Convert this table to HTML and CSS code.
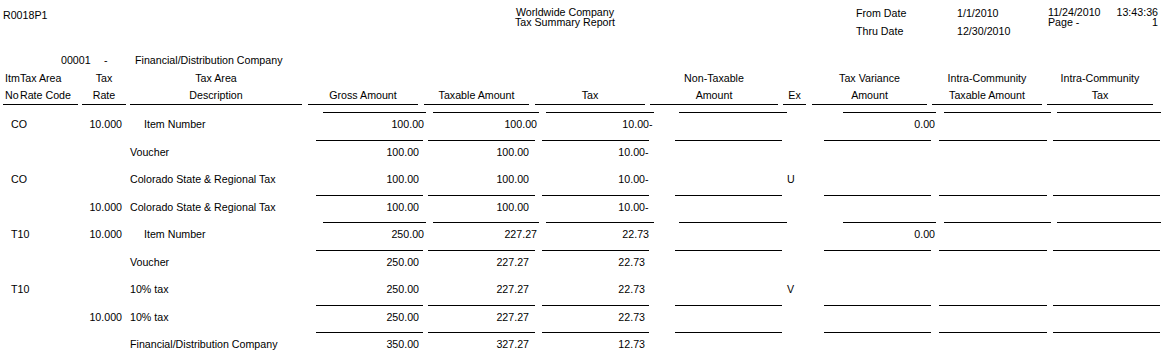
FILE: index.html
```html
<!DOCTYPE html>
<html lang="en">
<head>
<meta charset="utf-8">
<title>Tax Summary Report</title>
<link rel="stylesheet" href="styles.css">
</head>
<body>
<div class="page">
  <header class="top">
    <div class="rid">R0018P1</div>
    <div class="title">
      <div>Worldwide Company</div>
      <div>Tax Summary Report</div>
    </div>
    <div class="dates">
      <span>From Date</span><span>1/1/2010</span>
      <span>Thru Date</span><span>12/30/2010</span>
    </div>
    <div class="stamp">
      <div class="stamp-row"><span>11/24/2010</span><span>13:43:36</span></div>
      <div class="stamp-row"><span>Page -</span><span>1</span></div>
    </div>
  </header>

  <div class="company">
    <span class="co-code">00001</span>
    <span class="co-dash">-</span>
    <span class="co-name">Financial/Distribution Company</span>
  </div>

  <div class="colhead">
    <div class="h h-itm"><div>Itm</div><div>No</div></div>
    <div class="h h-area"><div>Tax Area</div><div>Rate Code</div></div>
    <div class="h h-rate"><div>Tax</div><div>Rate</div></div>
    <div class="h h-desc"><div>Tax Area</div><div>Description</div></div>
    <div class="h h-gross"><div>&nbsp;</div><div>Gross Amount</div></div>
    <div class="h h-taxable"><div>&nbsp;</div><div>Taxable Amount</div></div>
    <div class="h h-tax"><div>&nbsp;</div><div>Tax</div></div>
    <div class="h h-nontax"><div>Non-Taxable</div><div>Amount</div></div>
    <div class="h h-ex"><div>&nbsp;</div><div>Ex</div></div>
    <div class="h h-var"><div>Tax Variance</div><div>Amount</div></div>
    <div class="h h-intra"><div>Intra-Community</div><div>Taxable Amount</div></div>
    <div class="h h-intratax"><div>Intra-Community</div><div>Tax</div></div>
  </div>

  <div class="rows">
    <div class="row row-a ruled">
      <div class="code">CO</div><div class="rate">10.000</div><div class="desc">Item Number</div>
      <div class="amt gross">100.00</div><div class="amt taxable">100.00</div><div class="amt tax">10.00<span class="minus">-</span></div>
      <div class="amt nontax"></div><div class="ex"></div><div class="amt var">0.00</div><div class="amt intra"></div><div class="amt intratax"></div>
    </div>
    <div class="row row-b ruled">
      <div class="code"></div><div class="rate"></div><div class="desc">Voucher</div>
      <div class="amt gross">100.00</div><div class="amt taxable">100.00</div><div class="amt tax">10.00<span class="minus">-</span></div>
      <div class="amt nontax"></div><div class="ex"></div><div class="amt var"></div><div class="amt intra"></div><div class="amt intratax"></div>
    </div>
    <div class="row row-b">
      <div class="code">CO</div><div class="rate"></div><div class="desc">Colorado State &amp; Regional Tax</div>
      <div class="amt gross">100.00</div><div class="amt taxable">100.00</div><div class="amt tax">10.00<span class="minus">-</span></div>
      <div class="amt nontax"></div><div class="ex">U</div><div class="amt var"></div><div class="amt intra"></div><div class="amt intratax"></div>
    </div>
    <div class="row row-b ruled">
      <div class="code"></div><div class="rate">10.000</div><div class="desc">Colorado State &amp; Regional Tax</div>
      <div class="amt gross">100.00</div><div class="amt taxable">100.00</div><div class="amt tax">10.00<span class="minus">-</span></div>
      <div class="amt nontax"></div><div class="ex"></div><div class="amt var"></div><div class="amt intra"></div><div class="amt intratax"></div>
    </div>
    <div class="row row-a ruled">
      <div class="code">T10</div><div class="rate">10.000</div><div class="desc">Item Number</div>
      <div class="amt gross">250.00</div><div class="amt taxable">227.27</div><div class="amt tax">22.73</div>
      <div class="amt nontax"></div><div class="ex"></div><div class="amt var">0.00</div><div class="amt intra"></div><div class="amt intratax"></div>
    </div>
    <div class="row row-b ruled">
      <div class="code"></div><div class="rate"></div><div class="desc">Voucher</div>
      <div class="amt gross">250.00</div><div class="amt taxable">227.27</div><div class="amt tax">22.73</div>
      <div class="amt nontax"></div><div class="ex"></div><div class="amt var"></div><div class="amt intra"></div><div class="amt intratax"></div>
    </div>
    <div class="row row-b">
      <div class="code">T10</div><div class="rate"></div><div class="desc">10% tax</div>
      <div class="amt gross">250.00</div><div class="amt taxable">227.27</div><div class="amt tax">22.73</div>
      <div class="amt nontax"></div><div class="ex">V</div><div class="amt var"></div><div class="amt intra"></div><div class="amt intratax"></div>
    </div>
    <div class="row row-b ruled">
      <div class="code"></div><div class="rate">10.000</div><div class="desc">10% tax</div>
      <div class="amt gross">250.00</div><div class="amt taxable">227.27</div><div class="amt tax">22.73</div>
      <div class="amt nontax"></div><div class="ex"></div><div class="amt var"></div><div class="amt intra"></div><div class="amt intratax"></div>
    </div>
    <div class="row row-b ruled">
      <div class="code"></div><div class="rate"></div><div class="desc">Financial/Distribution Company</div>
      <div class="amt gross">350.00</div><div class="amt taxable">327.27</div><div class="amt tax">12.73</div>
      <div class="amt nontax"></div><div class="ex"></div><div class="amt var"></div><div class="amt intra"></div><div class="amt intratax"></div>
    </div>
  </div>
</div>
</body>
</html>
```

FILE: styles.css
```css
* { box-sizing: border-box; }

body {
  margin: 0;
  background: #fff;
  color: #000;
  font-family: "Liberation Sans", Arial, sans-serif;
  font-size: 8pt;
  line-height: 12px;
}

.page {
  width: 1161px;
  height: 353px;
  overflow: hidden;
  white-space: nowrap;
}

/* ---------- top banner ---------- */
.top {
  display: flex;
  height: 44px;
}
.rid {
  width: 465px;
  padding: 9px 0 0 3px;
}
.title {
  width: 200px;
  text-align: center;
  line-height: 10px;
  padding-top: 7px;
}
.dates {
  margin-left: 191px;
  width: 192px;
  display: grid;
  grid-template-columns: 101px auto;
  align-content: start;
  line-height: 18px;
  padding-top: 4px;
}
.stamp {
  width: 110px;
  line-height: 10px;
  padding-top: 7px;
}
.stamp-row {
  display: flex;
  justify-content: space-between;
}

/* ---------- company line ---------- */
.company {
  display: flex;
  margin-top: 10px;
  padding-left: 61px;
}
.co-code { width: 43px; }
.co-dash { width: 31px; }

/* ---------- column headings ---------- */
.colhead {
  display: flex;
  margin-top: 4px;
  line-height: 17px;
}
.h {
  text-align: center;
  border-bottom: 1px solid #000;
}
.h-itm { width: 17px; margin-left: 3px; text-align: left; padding-left: 2px; }
.h-area { width: 58px; text-align: left; }
.h-rate { width: 44px; margin-left: 4px; }
.h-desc { width: 172px; margin-left: 4px; }
.h-gross { width: 110px; margin-left: 6px; }
.h-taxable { width: 105px; margin-left: 6px; }
.h-tax { width: 110px; margin-left: 6px; }
.h-nontax { width: 128px; margin-left: 5px; }
.h-ex { width: 23px; margin-left: 5px; }
.h-var { width: 115px; margin-left: 6px; }
.h-intra { width: 110px; margin-left: 5px; }
.h-intratax { width: 106px; margin-left: 5px; }

/* ---------- detail rows ---------- */
.rows {
  margin-top: 7px;
}
.row {
  display: flex;
  height: 27.5px;
}
.row > div {
  padding-top: 5px;
  border-top: 1px solid transparent;
}
.ruled > .amt {
  border-top-color: #000;
}
.code { width: 82px; padding-left: 11px; }
.rate { width: 40px; text-align: right; }
.amt { text-align: right; }
.minus {
  display: inline-block;
  width: 5px;
  margin-right: -5px;
  text-align: left;
}

/* row layout A : item-number lines */
.row-a .desc { margin-left: 22px; width: 179px; }
.row-a .gross { width: 103px; padding-right: 2px; }
.row-a .taxable { margin-left: 7px; width: 106px; padding-right: 2px; }
.row-a .tax { margin-left: 7px; width: 108px; padding-right: 5px; }
.row-a .nontax { margin-left: 25px; width: 108px; }
.row-a .ex { width: 56px; padding-left: 1px; }
.row-a .var { width: 93px; padding-right: 1px; }
.row-a .intra { margin-left: 8px; width: 107px; }
.row-a .intratax { margin-left: 6px; width: 104px; }

/* row layout B : voucher / summary lines */
.row-b .desc { margin-left: 8px; width: 186px; }
.row-b .gross { width: 107px; padding-right: 4px; }
.row-b .taxable { margin-left: 5px; width: 107px; padding-right: 6px; }
.row-b .tax { margin-left: 7px; width: 107px; padding-right: 4px; }
.row-b .nontax { margin-left: 26px; width: 107px; }
.row-b .ex { width: 42px; padding-left: 5px; }
.row-b .var { width: 107px; }
.row-b .intra { margin-left: 8px; width: 108px; }
.row-b .intratax { margin-left: 6px; width: 107px; }
```
